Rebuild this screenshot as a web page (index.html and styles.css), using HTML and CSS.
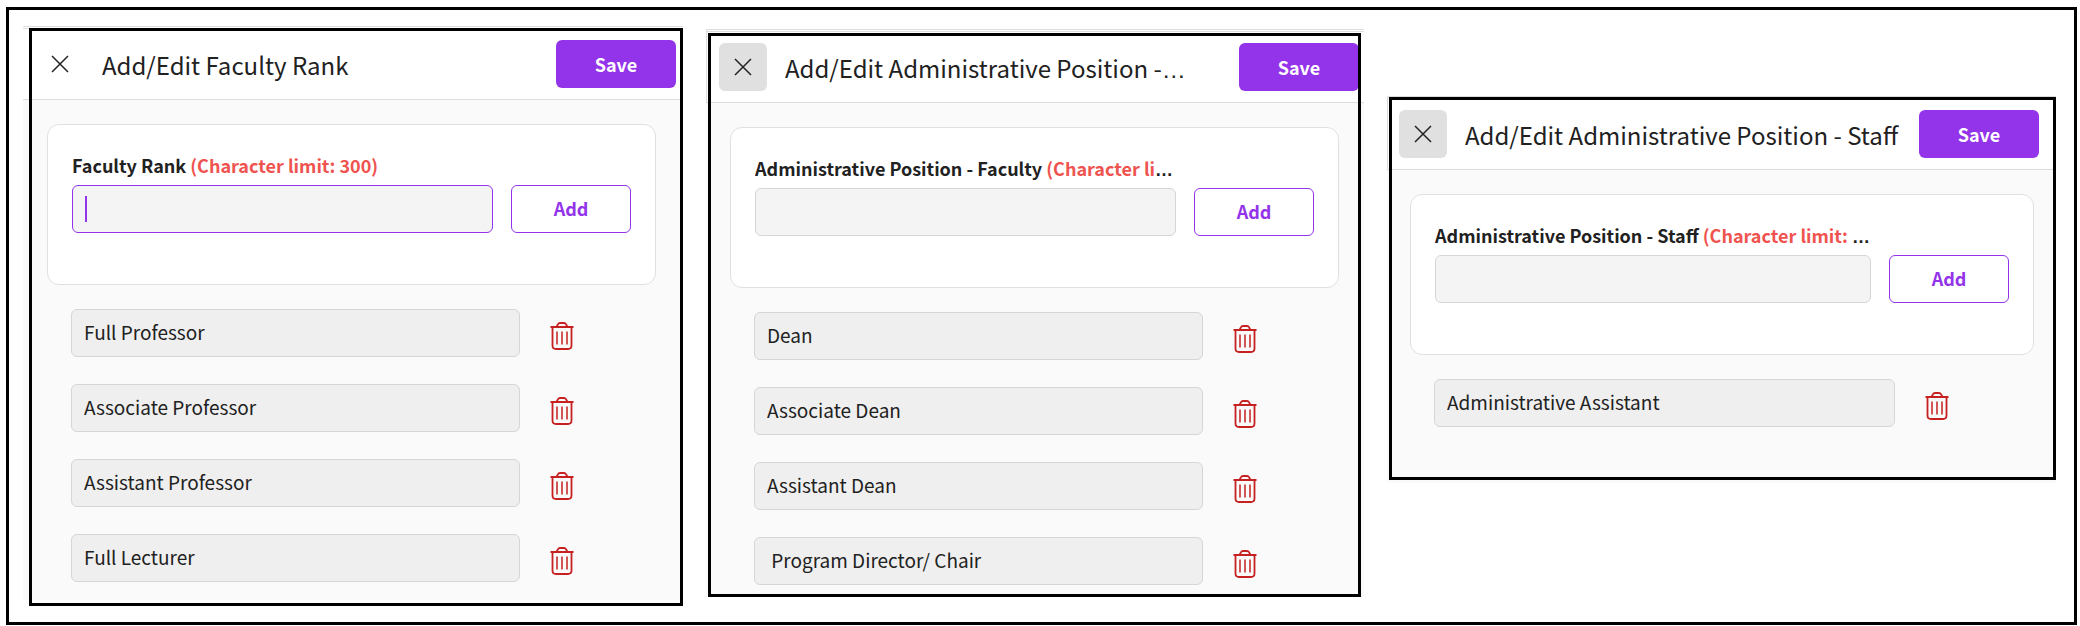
FILE: index.html
```
<!DOCTYPE html>
<html lang="en">
<head>
	<meta charset="utf-8">
	<title>Add/Edit Positions</title>
	<meta name="viewport" content="width=device-width, initial-scale=1">
	<link rel="stylesheet" href="styles.css">
</head>
<body>
	<!-- shared icons -->
	<svg class="icon_defs" aria-hidden="true">
		<symbol id="icon_close" viewBox="0 0 18 18">
			<path d="M1 1L17 17M17 1L1 17" fill="none" stroke="currentColor" stroke-width="1.5" />
		</symbol>
		<symbol id="icon_trash" viewBox="0 0 24 28">
			<path d="M0.5 5H23.5M6.5 5L8 2.2Q8.6 1 10 1H14Q15.4 1 16 2.2L17.5 5M2.5 5V23.5Q2.5 27 6 27H18Q21.5 27 21.5 23.5V5" fill="none" stroke="currentColor" stroke-width="1.8" />
			<path d="M7 9.5V22.5M12 9.5V22.5M17 9.5V22.5" fill="none" stroke="currentColor" stroke-width="1.5" />
		</symbol>
	</svg>
	<main class="board">
		<section class="panel panel_rank">
			<header class="panel_header">
				<button type="button" class="close_btn" aria-label="Close"><svg><use href="#icon_close" /></svg></button>
				<h2><span>Add/Edit Faculty Rank</span></h2>
				<button type="button" class="save_btn">Save</button>
			</header>
			<div class="panel_body">
				<form class="card">
					<div class="field focused">
						<label for="rank"><span>Faculty Rank <span class="limit">(Character limit: 300)</span></span></label>
						<div class="input_wrap"><input type="text" id="rank" maxlength="300"></div>
					</div>
					<button type="button" class="add_btn">Add</button>
				</form>
				<ul class="items">
					<li><input type="text" aria-label="Rank 1" value="Full Professor" readonly><button type="button" class="trash_btn" aria-label="Delete"><svg><use href="#icon_trash" /></svg></button></li>
					<li><input type="text" aria-label="Rank 2" value="Associate Professor" readonly><button type="button" class="trash_btn" aria-label="Delete"><svg><use href="#icon_trash" /></svg></button></li>
					<li><input type="text" aria-label="Rank 3" value="Assistant Professor" readonly><button type="button" class="trash_btn" aria-label="Delete"><svg><use href="#icon_trash" /></svg></button></li>
					<li><input type="text" aria-label="Rank 4" value="Full Lecturer" readonly><button type="button" class="trash_btn" aria-label="Delete"><svg><use href="#icon_trash" /></svg></button></li>
				</ul>
			</div>
		</section>

		<section class="panel panel_faculty">
			<header class="panel_header">
				<button type="button" class="close_btn active" aria-label="Close"><svg><use href="#icon_close" /></svg></button>
				<h2><span>Add/Edit Administrative Position - Faculty</span></h2>
				<button type="button" class="save_btn">Save</button>
			</header>
			<div class="panel_body">
				<form class="card">
					<div class="field">
						<label for="faculty"><span>Administrative Position - Faculty <span class="limit">(Character limit: 300)</span></span></label>
						<div class="input_wrap"><input type="text" id="faculty" maxlength="300"></div>
					</div>
					<button type="button" class="add_btn">Add</button>
				</form>
				<ul class="items">
					<li><input type="text" aria-label="Position 1" value="Dean" readonly><button type="button" class="trash_btn" aria-label="Delete"><svg><use href="#icon_trash" /></svg></button></li>
					<li><input type="text" aria-label="Position 2" value="Associate Dean" readonly><button type="button" class="trash_btn" aria-label="Delete"><svg><use href="#icon_trash" /></svg></button></li>
					<li><input type="text" aria-label="Position 3" value="Assistant Dean" readonly><button type="button" class="trash_btn" aria-label="Delete"><svg><use href="#icon_trash" /></svg></button></li>
					<li><input type="text" aria-label="Position 4" value=" Program Director/ Chair" readonly><button type="button" class="trash_btn" aria-label="Delete"><svg><use href="#icon_trash" /></svg></button></li>
				</ul>
			</div>
		</section>

		<section class="panel panel_staff">
			<header class="panel_header">
				<button type="button" class="close_btn active" aria-label="Close"><svg><use href="#icon_close" /></svg></button>
				<h2><span>Add/Edit Administrative Position - Staff</span></h2>
				<button type="button" class="save_btn">Save</button>
			</header>
			<div class="panel_body">
				<form class="card">
					<div class="field">
						<label for="staff"><span>Administrative Position - Staff <span class="limit">(Character limit: 300)</span></span></label>
						<div class="input_wrap"><input type="text" id="staff" maxlength="300"></div>
					</div>
					<button type="button" class="add_btn">Add</button>
				</form>
				<ul class="items">
					<li><input type="text" aria-label="Staff position 1" value="Administrative Assistant" readonly><button type="button" class="trash_btn" aria-label="Delete"><svg><use href="#icon_trash" /></svg></button></li>
				</ul>
			</div>
		</section>
	</main>
</body>
</html>
```
FILE: styles.css
```
* {
	box-sizing: border-box;
}
body {
	margin: 0;
	padding: 7px 3px 1px 6px;
	min-height: 100vh;
	display: flex;
	background: #fff;
	color: #212121;
	font-family: "Noto Sans CJK SC", "Noto Sans", sans-serif;
	font-size: 18px;
}
button, input {
	font: inherit;
	color: inherit;
}
button {
	padding: 0;
	border: none;
	background: none;
	cursor: pointer;
}
svg {
	display: block;
}
.icon_defs {
	display: none;
}
.board {
	flex: 1;
	min-width: 0;
	display: flex;
	align-items: flex-start;
	gap: 23px;
	padding: 0 18px 0 14px;
	border: 3px solid #000;
}
.panel {
	position: relative;
	min-width: 0;
	background: #fafafa;
}
/* black outline laid over each panel */
.panel::after {
	content: "";
	position: absolute;
	border: 3px solid #000;
	pointer-events: none;
}
.panel_rank {
	flex: 660 1 0;
	margin-top: 16px;
}
.panel_rank::after {
	inset: 2px 0 -6px 6px;
}
.panel_faculty {
	flex: 658 1 0;
	margin-top: 19px;
}
.panel_faculty::after {
	inset: 4px 3px 0 2px;
}
.panel_staff {
	flex: 669 1 0;
	margin-top: 86px;
}
.panel_staff::after {
	inset: 1px 0 3px 2px;
}
.panel_header {
	display: flex;
	align-items: center;
	gap: 18px;
	padding: 11px 7px 11px 12px;
	border: 1px solid #ddd;
	border-top: 3px double #ddd;
	border-right: none;
	background: #fff;
}
.panel_rank .panel_header {
	padding-left: 13px;
	border-left: none;
}
.panel_faculty .panel_header {
	padding-right: 5px;
}
.panel_staff .panel_header {
	padding-left: 11px;
	padding-right: 17px;
}
.panel_header h2 {
	flex: 1;
	min-width: 0;
	margin: 0;
	padding-top: 4px;
	font-size: 24px;
	font-weight: 400;
	line-height: 36px;
	white-space: nowrap;
	overflow: hidden;
	text-overflow: ellipsis;
}
.panel_faculty h2 {
	margin-right: 32px;
}
/* the block's own font draws the ellipsis, CJK fonts centre the dots */
.panel_header h2, .field label {
	font-family: "Liberation Sans", sans-serif;
}
h2 span, label span {
	font-family: "Noto Sans CJK SC", "Noto Sans", sans-serif;
}
.close_btn {
	display: flex;
	align-items: center;
	justify-content: center;
	width: 48px;
	height: 48px;
	border-radius: 6px;
}
.close_btn.active {
	background: #e0e0e0;
}
.close_btn svg {
	width: 18px;
	height: 18px;
}
.save_btn, .add_btn {
	flex: none;
	width: 120px;
	height: 48px;
	border-radius: 6px;
	font-weight: 700;
}
.save_btn {
	background: #9333ea;
	color: #fff;
}
.add_btn {
	padding-bottom: 2px;
	border: 1px solid #9333ea;
	background: #fff;
	color: #9333ea;
}
.panel_body {
	padding: 24px 27px 18px 24px;
}
.panel_faculty .panel_body {
	padding: 24px 25px 12px 24px;
}
.panel_staff .panel_body {
	padding: 24px 22px 56px 23px;
}
.card {
	display: flex;
	align-items: flex-end;
	gap: 18px;
	padding: 26px 24px 51px;
	border: 1px solid #e0e0e0;
	border-radius: 12px;
	background: #fff;
}
.field {
	flex: 1;
	min-width: 0;
}
.field label {
	display: block;
	margin-bottom: 4px;
	font-weight: 700;
	line-height: 28px;
	white-space: nowrap;
	overflow: hidden;
	text-overflow: ellipsis;
}
.field .limit {
	color: #ef5350;
}
.input_wrap {
	position: relative;
}
input {
	display: block;
	width: 100%;
	height: 48px;
	padding: 0 12px 3px;
	border: 1px solid #d6d6d6;
	border-radius: 6px;
	background: #f4f4f4;
	outline: none;
}
.focused input {
	border-color: #9333ea;
}
/* text cursor of the focused field */
.focused .input_wrap::after {
	content: "";
	position: absolute;
	left: 13px;
	top: 11px;
	width: 2px;
	height: 26px;
	background: #9333ea;
}
.items {
	display: flex;
	flex-direction: column;
	gap: 27px;
	margin: 24px 0 0;
	padding: 0 24px;
	list-style: none;
}
.items li {
	display: flex;
	align-items: center;
	gap: 30px;
}
.items input {
	width: 80%;
	background: #efefef;
	font-size: 19px;
}
.trash_btn {
	padding-top: 6px;
	color: #c62020;
}
.trash_btn svg {
	width: 24px;
	height: 28px;
}
```
